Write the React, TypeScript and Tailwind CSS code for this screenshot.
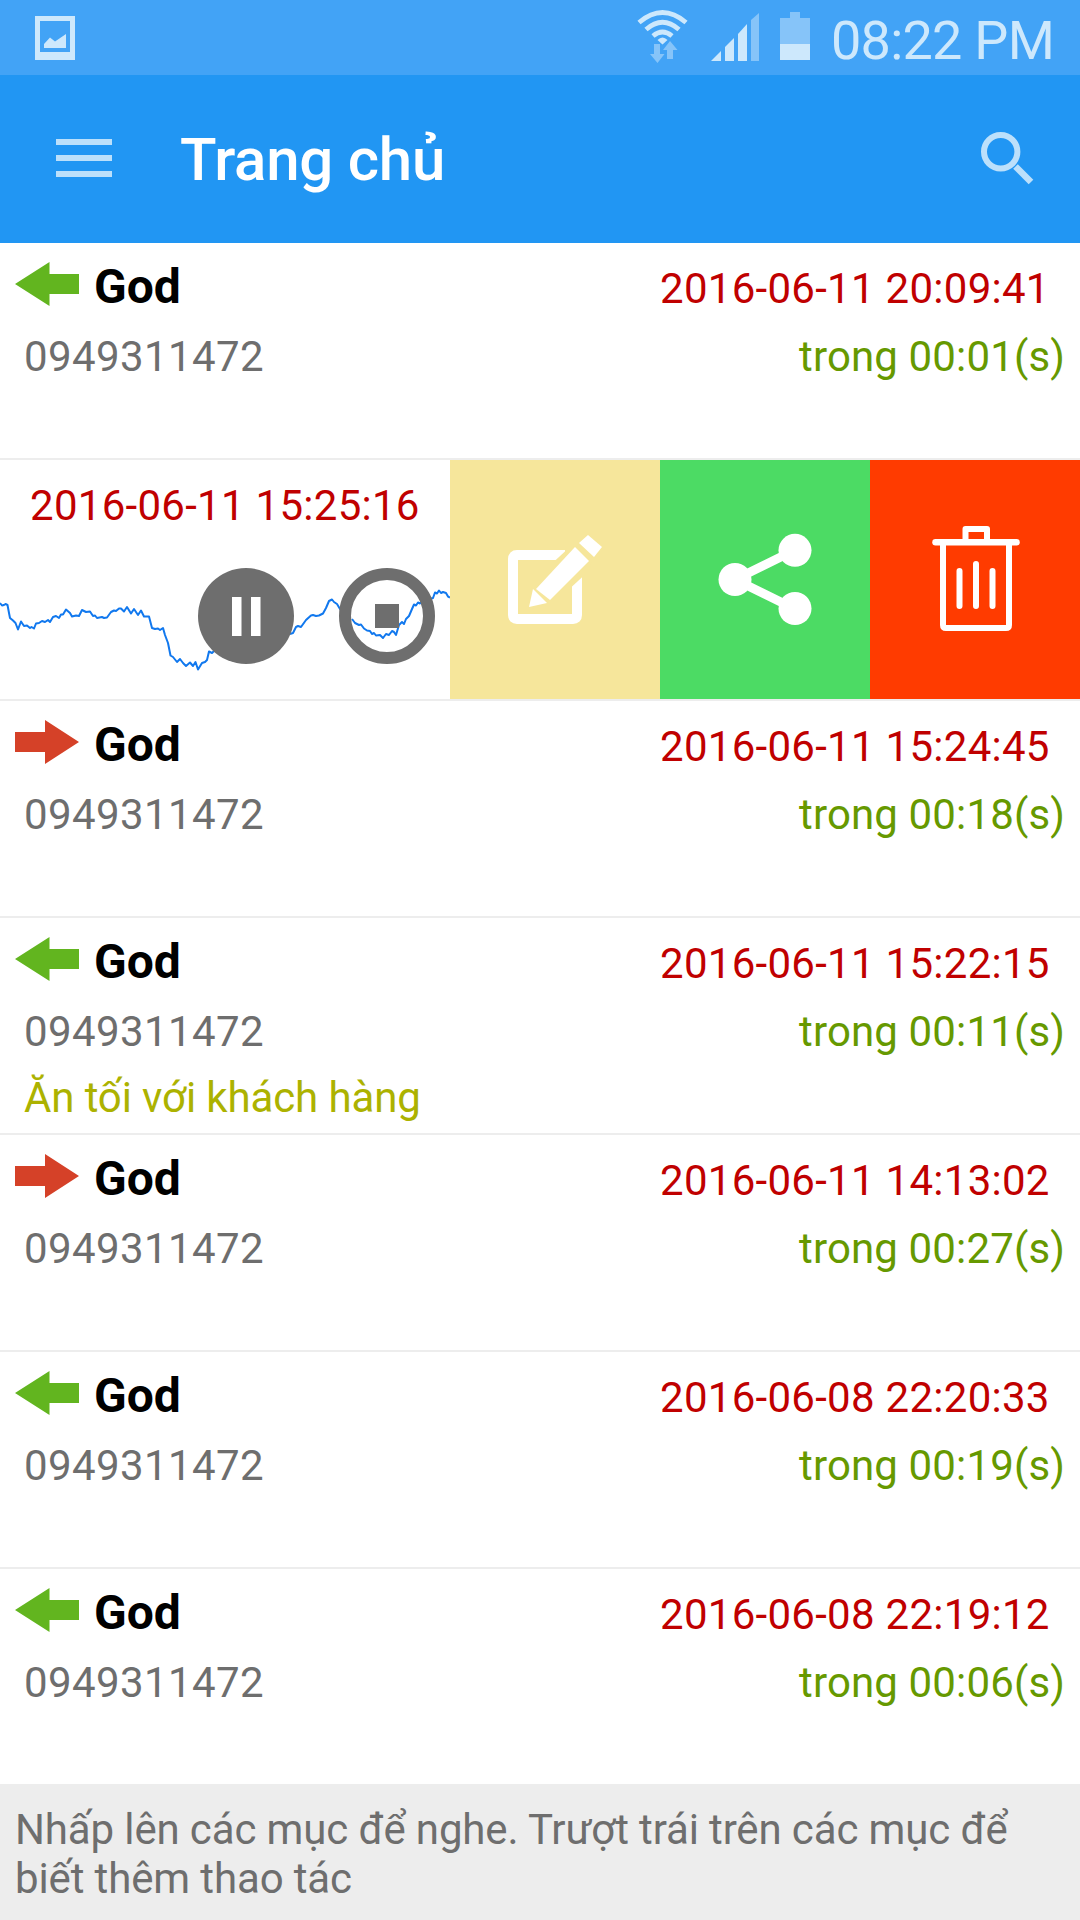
import clsx from "clsx";

type Call = {
  type: "in" | "out";
  name: string;
  phone: string;
  date: string;
  duration: string;
  note?: string;
};

const firstCall: Call = {
  type: "in",
  name: "God",
  phone: "0949311472",
  date: "2016-06-11 20:09:41",
  duration: "trong 00:01(s)",
};

const calls: Call[] = [
  {
    type: "out",
    name: "God",
    phone: "0949311472",
    date: "2016-06-11 15:24:45",
    duration: "trong 00:18(s)",
  },
  {
    type: "in",
    name: "God",
    phone: "0949311472",
    date: "2016-06-11 15:22:15",
    duration: "trong 00:11(s)",
    note: "Ăn tối với khách hàng",
  },
  {
    type: "out",
    name: "God",
    phone: "0949311472",
    date: "2016-06-11 14:13:02",
    duration: "trong 00:27(s)",
  },
  {
    type: "in",
    name: "God",
    phone: "0949311472",
    date: "2016-06-08 22:20:33",
    duration: "trong 00:19(s)",
  },
  {
    type: "in",
    name: "God",
    phone: "0949311472",
    date: "2016-06-08 22:19:12",
    duration: "trong 00:06(s)",
  },
];

function StatusBar() {
  return (
    <div className="flex h-[75px] items-start bg-[#42a3f6] text-[#cde8fc]">
      <svg width="40" height="44" viewBox="0 0 40 44" className="mt-4 ml-[35px]" fill="currentColor">
        <path fillRule="evenodd" d="M0 0H40V44H0ZM5 5V36H35V5Z" />
        <path d="M9 28L15 21.5L20 25.5L31 18V32H9Z" />
      </svg>
      <svg width="51" height="55" viewBox="0 0 51 55" className="mt-[9px] ml-auto" fill="none">
        <g stroke="currentColor" strokeWidth="4.8">
          <path d="M2 13.5Q25.5 -6.5 49 13.5" />
          <path d="M9 20.5Q25.5 6 42 20.5" />
          <path d="M16 27Q25.5 19 35 27" />
        </g>
        <path d="M20.5 31Q25.5 26 30.5 31L25.5 35.5Z" fill="currentColor" />
        <g fill="#86c4f9">
          <path d="M17 35H23V45H27.5L20.5 54L13 45H17Z" />
          <path d="M30 50H36V41H40.5L33 32L26 41H30Z" />
        </g>
      </svg>
      <svg width="49" height="48" viewBox="0 0 49 48" className="mt-[13px] ml-[23px]" fill="currentColor">
        <path d="M0 48L10 38V48Z" />
        <path d="M14 48V34L23 25V48Z" />
        <path d="M27 48V21L36 11V48Z" />
        <path d="M40 48V7L48 0V48Z" fill="#86c4f9" />
      </svg>
      <svg width="30" height="48" viewBox="0 0 30 48" className="mt-3 ml-5" fill="currentColor">
        <path d="M0 32V6H10V0H20V6H30V32Z" fill="#86c4f9" />
        <path d="M0 32H30V48H0Z" />
      </svg>
      <span className="mt-[9px] ml-[21px] w-[249px] text-[54px] leading-[63px] tracking-[-0.75px] whitespace-nowrap">
        08:22 PM
      </span>
    </div>
  );
}

function Toolbar() {
  return (
    <header className="flex h-[168px] items-center bg-[#2196f3]">
      <button aria-label="Menu" className="mb-[2px] ml-14 flex w-14 flex-col gap-[10px]">
        <span className="h-[6px] bg-[#bce0fb]" />
        <span className="h-[6px] bg-[#bce0fb]" />
        <span className="h-[6px] bg-[#bce0fb]" />
      </button>
      <h1 className="mt-px ml-[68px] text-[60px] leading-[70px] font-medium tracking-[-0.25px] text-white">
        Trang chủ
      </h1>
      <button aria-label="Search" className="mr-[46px] mb-[2px] ml-auto">
        <svg width="53" height="53" viewBox="0 0 53 53" fill="none" stroke="#bce0fb">
          <circle cx="19.7" cy="19.7" r="16.7" strokeWidth="6" />
          <path d="M34.5 34.5L50 50" strokeWidth="6.5" />
        </svg>
      </button>
    </header>
  );
}

function CallArrow({ type }: { type: Call["type"] }) {
  return (
    <svg width="64" height="44" viewBox="0 0 64 44" className="mt-[19px] ml-[15px]">
      {type === "in" ? (
        <path d="M0 22L34.5 0V12H64V32H34.5V44Z" fill="#62b51f" />
      ) : (
        <path d="M64 22L30 0V12H0V32H30V44Z" fill="#d54128" />
      )}
    </svg>
  );
}

function CallRow({ call, last }: { call: Call; last?: boolean }) {
  return (
    <li
      className={clsx(
        "flex justify-between border-[#ededed]",
        last ? "h-[215px]" : "h-[217px] border-b-2",
      )}
    >
      <div>
        <div className="flex items-start">
          <CallArrow type={call.type} />
          <span className="mt-4 ml-[15px] text-[48px] leading-[56px] font-bold text-black">
            {call.name}
          </span>
        </div>
        <p className="mt-[17px] ml-6 text-[42px] leading-[49px] tracking-[0.4px] text-[#6e6e6e]">
          {call.phone}
        </p>
        {call.note && (
          <p className="mt-[17px] ml-6 text-[42px] leading-[49px] tracking-[-0.12px] text-[#acb200]">
            {call.note}
          </p>
        )}
      </div>
      <div className="flex w-[420px] flex-col text-[42px] leading-[49px]">
        <p className="mt-[21px] tracking-[0.28px] whitespace-nowrap text-[#c00000]">{call.date}</p>
        <p className="mt-[19px] mr-[15px] self-end tracking-[0.14px] whitespace-nowrap text-[#669900]">
          {call.duration}
        </p>
      </div>
    </li>
  );
}

function Waveform() {
  return (
    <svg
      width="450"
      height="239"
      viewBox="0 460 450 239"
      fill="none"
      stroke="#1178ee"
      strokeWidth="2"
      strokeLinejoin="round"
      className="absolute top-0 left-0"
    >
      <path d="M0 603L2 605.5L4 605L5.5 604L7.5 605L9 613L10 618L13 620.5L15.5 623L18 629.5L21 621.5L24 626L27 625.5L30 628L31.5 627L34 628.5L36 623.5L39 623L42 621L45 622L48 620L50 622L53 617L56 616L59 618L61 614.5L63 614.5L66 609.5L70 613L72 616.5L76 615.5L79 616L82 610L86 612L90 611.5L93 616L95 615.5L97 618L102 617L104 618L107 617.5L111 612L114 610.5L116 611L119 608.5L121 608.5L124 611.5L127 607L131 613.5L134 609L138 615L141 610.5L144 616.5L149 616.5L152 628L155 629L158 628.5L160 630L163 628L165 635L168 643L170.5 655.5L173 657L177 662L180 659L183 663L186 666L190 662.5L193 666L195.5 662L198 669.5L202 663L205 662L207 660L209 651.5L212 653L215 650" />
      <path d="M290 634L293 633L296 627L298 626L301 627L306 620L311 615.5L313 615L316 616L319 615.5L323 613.5L326 608L329 601L332 599.5L334 602L337 604L340 609L343 612" />
      <path d="M352 619L355 623L359 625L361 624.5L364 628.5L367 630.5L370 631L372 634L374 633L376 635.5L380 635L383 638L386 634L389 635L392 631L394 632L396 635L399 625L402 622L404 624L406 619L409 616L412 609L414 604.5L416 605.5L418 602.5L420 603.5L422 601" />
      <path d="M430 599L433 598L435 592.5L437 593.5L439 590.5L441 593L443 592L446 593L448 596.5L450 597.5" />
    </svg>
  );
}

function SwipedRow() {
  return (
    <li className="flex h-[241px] border-b-2 border-[#ededed]">
      <div className="relative h-full w-[450px]">
        <p className="mt-[21px] ml-[30px] text-[42px] leading-[49px] tracking-[0.28px] text-[#c00000]">
          2016-06-11 15:25:16
        </p>
        <Waveform />
        <div className="relative mt-[38px] ml-[198px] flex gap-[45px]">
          <button aria-label="Pause">
            <svg width="96" height="96" viewBox="0 0 96 96">
              <circle cx="48" cy="48" r="48" fill="#6e6e6e" />
              <path d="M34 29H43.5V68H34ZM53 29H62.5V68H53Z" fill="#fff" />
            </svg>
          </button>
          <button aria-label="Stop">
            <svg width="96" height="96" viewBox="0 0 96 96">
              <circle cx="48" cy="48" r="42" fill="none" stroke="#6e6e6e" strokeWidth="12" />
              <path d="M36 36H60V60H36Z" fill="#6e6e6e" />
            </svg>
          </button>
        </div>
      </div>
      <button aria-label="Edit" className="h-full w-[210px] bg-[#f6e69b]">
        <svg width="210" height="239" viewBox="450 460 210 239">
          <path
            d="M565 555H517Q513 555 513 559V615Q513 619 517 619H573Q577 619 577 615V574"
            fill="none"
            stroke="#fff"
            strokeWidth="10"
          />
          <path d="M534 580L572 545L592 557L590 570L554 603L525 611Z" fill="#f6e69b" />
          <path d="M536 589L575 547L589 561L550 600Z" fill="#fff" />
          <path d="M579 543L588 535L602 547L594 557Z" fill="#fff" />
          <path d="M533 589L547 603L529 607Z" fill="#fff" />
        </svg>
      </button>
      <button aria-label="Share" className="h-full w-[210px] bg-[#4cdb64]">
        <svg width="210" height="239" viewBox="660 460 210 239" fill="#fff">
          <path d="M795 550L735 579.5L795 609" fill="none" stroke="#fff" strokeWidth="9" />
          <circle cx="735" cy="579.5" r="16.5" />
          <circle cx="795" cy="550.3" r="16.5" />
          <circle cx="795" cy="608.5" r="16.5" />
        </svg>
      </button>
      <button aria-label="Delete" className="h-full w-[210px] bg-[#ff3b00]">
        <svg width="210" height="239" viewBox="870 460 210 239" fill="none" stroke="#fff">
          <path d="M965.5 541V529H987V541" strokeWidth="6" strokeLinejoin="round" />
          <path d="M935.5 542.3H1016.5" strokeWidth="6.5" strokeLinecap="round" />
          <path d="M943 543V625Q943 628 946 628H1006Q1009 628 1009 625V543" strokeWidth="6" />
          <path
            d="M959.5 571V606M976 564V606M992.5 571V606"
            strokeWidth="6"
            strokeLinecap="round"
          />
        </svg>
      </button>
    </li>
  );
}

export default function App() {
  return (
    <div className="flex h-[1920px] w-[1080px] flex-col overflow-hidden bg-white font-['Roboto',sans-serif]">
      <StatusBar />
      <Toolbar />
      <ul>
        <CallRow call={firstCall} />
        <SwipedRow />
        {calls.map((call, i) => (
          <CallRow key={call.date} call={call} last={i === calls.length - 1} />
        ))}
      </ul>
      <footer className="flex-1 bg-[#ededed] px-[15px] pt-[21px] text-[42px] leading-[49px] tracking-[-0.13px] text-[#6e6e6e]">
        Nhấp lên các mục để nghe. Trượt trái trên các mục để biết thêm thao tác
      </footer>
    </div>
  );
}
